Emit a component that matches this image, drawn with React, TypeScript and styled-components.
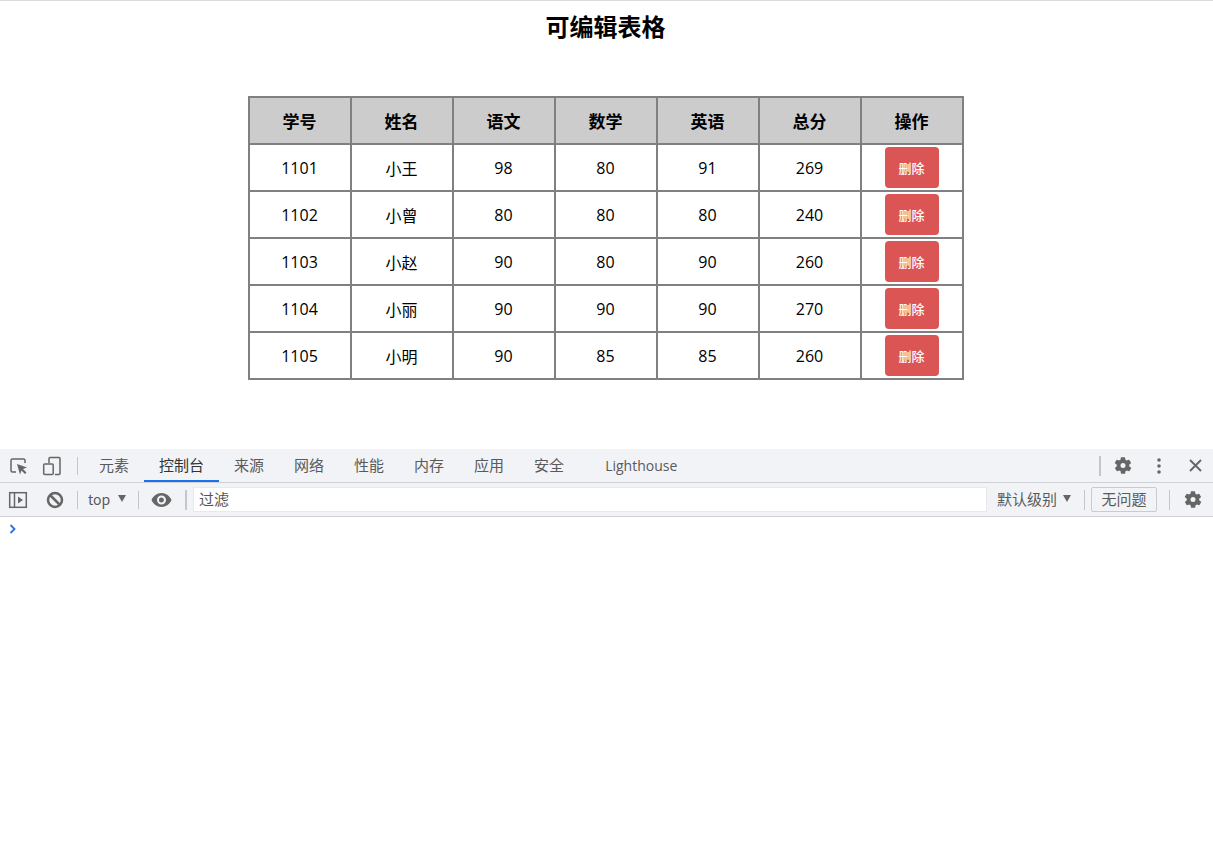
import React from "react";
import styled, { createGlobalStyle } from "styled-components";

const Global = createGlobalStyle`
  html, body { margin: 0; padding: 0; background: #fff; }
  body { font-family: "Open Sans", "Noto Sans CJK SC", sans-serif; }
`;

const Page = styled.div`
  width: 1213px;
  height: 865px;
  display: flex;
  flex-direction: column;
  overflow: hidden;
`;
const Viewport = styled.main`
  height: 448px;
  border-top: 1px solid #dcdcdc;
  display: flex;
  flex-direction: column;
  align-items: center;
`;
const Title = styled.h2`
  margin: 11px 2px 0 0;
  height: 32px;
  line-height: 32px;
  font-size: 24px;
  font-weight: 700;
  color: #000;
  font-family: "Liberation Sans", "Noto Sans CJK SC", sans-serif;
`;
const Table = styled.table`
  margin: 52px 0 0 -2px;
  border-collapse: collapse;
  border: 2px solid #808080;
  table-layout: fixed;
  width: 716px;
  font-size: 16px;
  color: #000;
`;
const Cell = styled.td<{ $cjk?: boolean }>`
  border: 2px solid #808080;
  height: 45px;
  padding: 0;
  text-align: center;
  width: 100px;
  box-sizing: content-box;
  font-family: ${(p) => (p.$cjk ? '"Noto Sans CJK SC", sans-serif' : "inherit")};
`;
const Head = styled.th`
  border: 2px solid #808080;
  height: 45px;
  padding: 0;
  text-align: center;
  width: 100px;
  background: #cccccc;
  font-family: "Noto Sans CJK SC", sans-serif;
  font-size: 17px;
  font-weight: 700;
  box-sizing: content-box;
`;
const DeleteButton = styled.button`
  display: block;
  margin: 0 auto;
  width: 54px;
  height: 41px;
  padding: 0;
  border: none;
  border-radius: 4px;
  background: #db5555;
  color: #fff;
  font-size: 13px;
  font-weight: 500;
  font-family: "Noto Sans CJK SC", sans-serif;
`;
const Devtools = styled.section`
  flex: 1;
  display: flex;
  flex-direction: column;
  font-family: "Noto Sans CJK SC", "Liberation Sans", sans-serif;
  color: #5a5a5a;
`;
const TabBar = styled.div`
  height: 33px;
  background: #f1f3f6;
  border-bottom: 1px solid #cfd1d5;
  display: flex;
  align-items: center;
  padding-left: 9px;
`;
const ToolBar = styled.div`
  height: 33px;
  background: #f1f3f6;
  border-bottom: 1px solid #cfd1d5;
  display: flex;
  align-items: center;
  padding-left: 8px;
`;
const IconSlot = styled.span<{ $w: number; $ml?: number }>`
  width: ${(p) => p.$w}px;
  margin-left: ${(p) => p.$ml ?? 0}px;
  display: flex;
  justify-content: center;
  align-items: center;
  flex: none;
`;
const Sep = styled.span<{ $ml: number; $mr: number; $h?: number; $w?: number }>`
  width: ${(p) => p.$w ?? 1}px;
  height: ${(p) => p.$h ?? 18}px;
  margin: 0 ${(p) => p.$mr}px 0 ${(p) => p.$ml}px;
  background: #c4c6c9;
  flex: none;
`;
const Tabs = styled.div`
  display: flex;
  height: 100%;
`;
const Tab = styled.div<{ $active?: boolean; $ml?: number }>`
  height: 100%;
  box-sizing: border-box;
  padding: 0 15px;
  margin-left: ${(p) => p.$ml ?? 0}px;
  line-height: 31px;
  font-size: 15px;
  color: ${(p) => (p.$active ? "#333" : "#5a5a5a")};
  border-bottom: 2px solid ${(p) => (p.$active ? "#1a73e8" : "transparent")};
  margin-bottom: -1px;
  white-space: nowrap;
`;
const LighthouseLabel = styled.span`
  font-family: "Open Sans", "Liberation Sans", sans-serif;
  font-size: 14px;
`;
const Spacer = styled.div`
  flex: 1;
`;
const TopSelect = styled.span`
  display: flex;
  align-items: center;
  gap: 8px;
  font-size: 14px;
  width: 50px;
  padding: 0 0 2px 10px;
  flex: none;
`;
const Arrow = styled.span`
  width: 0;
  height: 0;
  border-left: 4.5px solid transparent;
  border-right: 4.5px solid transparent;
  border-top: 7px solid #666;
`;
const Filter = styled.div`
  width: 794px;
  height: 25px;
  box-sizing: border-box;
  background: #fff;
  border: 1px solid #e8e9eb;
  padding-left: 5px;
  font-size: 15px;
  line-height: 22px;
  color: #555;
  flex: none;
`;
const Level = styled.span`
  display: flex;
  align-items: center;
  gap: 6px;
  margin-left: 10px;
  padding-bottom: 2px;
  font-size: 15px;
  white-space: nowrap;
  flex: none;
`;
const Issues = styled.span`
  width: 66px;
  height: 25px;
  box-sizing: border-box;
  border: 1px solid #c9cbce;
  border-radius: 2px;
  font-size: 15px;
  line-height: 21px;
  text-align: center;
  flex: none;
`;
const Console = styled.div`
  flex: 1;
  background: #fff;
  padding: 7px 0 0 9px;
`;

const Gear = () => (
  <svg width="23" height="23" viewBox="0 0 24 24" fill="#666">
    <path d="M19.4 13a7.6 7.6 0 0 0 0-2l2.1-1.6a.5.5 0 0 0 .1-.6l-2-3.5a.5.5 0 0 0-.6-.2l-2.5 1a7.3 7.3 0 0 0-1.7-1l-.4-2.7a.5.5 0 0 0-.5-.4h-4a.5.5 0 0 0-.5.4l-.4 2.7a7.3 7.3 0 0 0-1.7 1l-2.5-1a.5.5 0 0 0-.6.2l-2 3.5a.5.5 0 0 0 .1.6L4.6 11a7.6 7.6 0 0 0 0 2l-2.1 1.6a.5.5 0 0 0-.1.6l2 3.5c.1.2.4.3.6.2l2.5-1a7.3 7.3 0 0 0 1.7 1l.4 2.7c0 .2.3.4.5.4h4c.2 0 .5-.2.5-.4l.4-2.7a7.3 7.3 0 0 0 1.7-1l2.5 1c.2.1.5 0 .6-.2l2-3.5a.5.5 0 0 0-.1-.6zM12 15a3 3 0 1 1 0-6 3 3 0 0 1 0 6z" />
  </svg>
);

const rows = [
  ["1101", "小王", 98, 80, 91, 269],
  ["1102", "小曾", 80, 80, 80, 240],
  ["1103", "小赵", 90, 80, 90, 260],
  ["1104", "小丽", 90, 90, 90, 270],
  ["1105", "小明", 90, 85, 85, 260],
];
const heads = ["学号", "姓名", "语文", "数学", "英语", "总分", "操作"];
const tabs = ["元素", "控制台", "来源", "网络", "性能", "内存", "应用", "安全"];

export default function App() {
  return (
    <Page>
      <Global />
      <Viewport>
        <Title>可编辑表格</Title>
        <Table>
          <thead>
            <tr>
              {heads.map((h) => (
                <Head key={h}>{h}</Head>
              ))}
            </tr>
          </thead>
          <tbody>
            {rows.map((r) => (
              <tr key={r[0]}>
                {r.map((v, i) => (
                  <Cell key={i} $cjk={i === 1}>
                    {v}
                  </Cell>
                ))}
                <Cell>
                  <DeleteButton>删除</DeleteButton>
                </Cell>
              </tr>
            ))}
          </tbody>
        </Table>
      </Viewport>
      <Devtools>
        <TabBar>
          <IconSlot $w={20}>
            <svg width="20" height="20" viewBox="0 0 20 20" fill="none">
              <path d="M7 16H3.500A1.500 1.500 0 0 1 2 14.500V4.500A1.500 1.500 0 0 1 3.500 3h11A1.500 1.500 0 0 1 16 4.500V7" stroke="#666" strokeWidth="1.500" />
              <path d="M8 8l10 3.500-4 1.500 3.500 3.500-1.500 1.500-3.500-3.500-1.500 4z" fill="#666" />
            </svg>
          </IconSlot>
          <IconSlot $w={20} $ml={13}>
            <svg width="20" height="20" viewBox="0 0 20 20" fill="none" stroke="#666" strokeWidth="1.500">
              <path d="M7 7V2.500A1 1 0 0 1 8 1.500h9a1 1 0 0 1 1 1v15a1 1 0 0 1-1 1h-4" />
              <rect x="1.700" y="8" width="9.500" height="10.500" rx="1" />
            </svg>
          </IconSlot>
          <Sep $ml={15} $mr={6} />
          <Tabs>
            {tabs.map((t) => (
              <Tab key={t} $active={t === "控制台"}>
                {t}
              </Tab>
            ))}
            <Tab $ml={11}>
              <LighthouseLabel>Lighthouse</LighthouseLabel>
            </Tab>
          </Tabs>
          <Spacer />
          <Sep $ml={0} $mr={12} $h={20} $w={2} />
          <IconSlot $w={20}>
            <Gear />
          </IconSlot>
          <IconSlot $w={20} $ml={16}>
            <svg width="4" height="16" viewBox="0 0 4 16" fill="#666">
              <circle cx="2" cy="2" r="1.800" />
              <circle cx="2" cy="8" r="1.800" />
              <circle cx="2" cy="14" r="1.800" />
            </svg>
          </IconSlot>
          <IconSlot $w={20} $ml={16}>
            <svg width="13" height="13" viewBox="0 0 13 13" stroke="#666" strokeWidth="1.900">
              <path d="M1 1l11 11M12 1L1 12" />
            </svg>
          </IconSlot>
          <IconSlot $w={8} />
        </TabBar>
        <ToolBar>
          <IconSlot $w={20}>
            <svg width="20" height="18" viewBox="0 0 20 18" fill="none">
              <rect x="1.700" y="1.700" width="16.600" height="14.600" stroke="#666" strokeWidth="1.500" />
              <path d="M6.500 2v14" stroke="#666" strokeWidth="1.500" />
              <path d="M10 5.500l5 3.500-5 3.500z" fill="#666" />
            </svg>
          </IconSlot>
          <IconSlot $w={18} $ml={18}>
            <svg width="18" height="18" viewBox="0 0 18 18" fill="none" stroke="#666" strokeWidth="2.500">
              <circle cx="9" cy="9" r="7" />
              <path d="M4 4l10 10" />
            </svg>
          </IconSlot>
          <Sep $ml={13} $mr={0} />
          <TopSelect>
            top
            <Arrow />
          </TopSelect>
          <Sep $ml={0} $mr={12} />
          <IconSlot $w={21}>
            <svg width="21" height="14" viewBox="0 0 21 14">
              <path fillRule="evenodd" d="M10.500 0C6 0 2.200 2.900.5 7c1.700 4.100 5.500 7 10 7s8.300-2.900 10-7c-1.700-4.100-5.500-7-10-7zm0 11.500a4.500 4.500 0 1 1 0-9 4.500 4.500 0 0 1 0 9zm0-7a2.500 2.500 0 1 0 0 5 2.500 2.500 0 0 0 0-5z" fill="#666" />
            </svg>
          </IconSlot>
          <Sep $ml={13} $mr={6} $h={20} $w={2} />
          <Filter>过滤</Filter>
          <Level>
            默认级别
            <Arrow />
          </Level>
          <Sep $ml={13} $mr={6} $h={20} />
          <Issues>无问题</Issues>
          <Sep $ml={12} $mr={13} $h={20} />
          <IconSlot $w={20}>
            <Gear />
          </IconSlot>
        </ToolBar>
        <Console>
          <svg width="8" height="10" viewBox="0 0 8 10" fill="none" stroke="#2a72e8" strokeWidth="1.800" display="block">
            <path d="M1.500 1l4 4-4 4" />
          </svg>
        </Console>
      </Devtools>
    </Page>
  );
}
